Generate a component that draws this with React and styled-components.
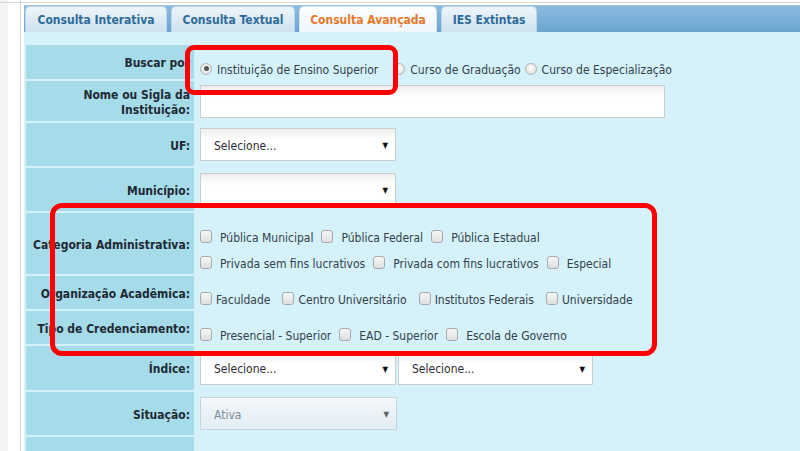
import React from "react";
import styled, { createGlobalStyle } from "styled-components";

const Global = createGlobalStyle`
  html, body { margin: 0; padding: 0; background: #fff; }
  body { font-family: "DejaVu Sans Condensed", "DejaVu Sans", sans-serif; font-stretch: condensed; }
  * { box-sizing: border-box; }
`;

const Page = styled.div`
  position: relative;
  width: 800px;
  height: 451px;
  overflow: hidden;
  padding: 5px 0 0 24px;
  background:
    linear-gradient(to bottom, transparent 2px, #d6d6d6 2px, #d6d6d6 3px, transparent 3px) 0 0 / 100% 5px no-repeat,
    linear-gradient(to right, #f3f3f3 0, #f3f3f3 8px, #fff 8px, #fff 20px, #d2d2d2 20px, #d2d2d2 21px, #fff 21px);
`;

const Panel = styled.div`
  height: 100%;
  background: #d5f1f9;
  display: flex;
  flex-direction: column;
`;

const TabBar = styled.div`
  height: 28px;
  display: flex;
  align-items: flex-end;
  gap: 4px;
  padding-left: 1px;
  background: linear-gradient(to bottom, #8dbadd 0%, #78aed6 60%, #6aa3cf 100%);
  border-top: 1px solid #9cc3e0;
`;

const Tab = styled.div`
  height: 26px;
  width: ${(p) => p.$w}px;
  border-radius: 5px 5px 0 0;
  border: 1px solid ${(p) => (p.$active ? "#cfe6f1" : "#bcd7ea")};
  border-bottom: none;
  background: ${(p) =>
    p.$active
      ? "linear-gradient(to bottom, #fbfdfe 0%, #eef7fb 100%)"
      : "linear-gradient(to bottom, #eef5fa 0%, #d9e9f3 60%, #cde3ef 100%)"};
  color: ${(p) => (p.$active ? "#e8782a" : "#2f6a99")};
  font-weight: bold;
  font-size: 12px;
  display: flex;
  align-items: center;
  justify-content: center;
  padding-top: 1px;
`;

const Form = styled.div`
  padding: 13px 0 0 2px;
  display: grid;
  grid-template-columns: 168px 1fr;
  grid-auto-rows: auto;
  row-gap: 2px;
  column-gap: 2px;
`;

const Label = styled.div`
  background: #a6dbea;
  height: ${(p) => p.$h}px;
  display: flex;
  align-items: center;
  justify-content: flex-end;
  text-align: right;
  padding: 3px 4px 0 0;
  font-weight: bold;
  font-size: 12px;
  line-height: 15px;
  color: #1e2a33;
`;

const Cell = styled.div`
  height: ${(p) => p.$h}px;
  display: flex;
  align-items: center;
  padding-left: 4px;
  padding-top: ${(p) => p.$pt || 0}px;
  font-size: 12px;
  color: #33414a;
`;

const Stack = styled.div`
  display: flex;
  flex-direction: column;
  gap: 8px;
`;

const Line = styled.div`
  display: flex;
  align-items: center;
  height: 18px;
`;

const Opt = styled.label`
  display: flex;
  align-items: center;
  gap: ${(p) => (p.$tight ? 4 : 8)}px;
  margin-right: ${(p) => (p.$tight ? 12 : 8)}px;
  white-space: nowrap;
  &:last-child { margin-right: 0; }
`;

const RadioOpt = styled.label`
  display: flex;
  align-items: center;
  gap: 5px;
  margin-right: ${(p) => p.$mr || 4}px;
  white-space: nowrap;
`;

const Radio = styled.span`
  width: 12px;
  height: 12px;
  border-radius: 50%;
  border: 1px solid #b4b4b4;
  background: radial-gradient(circle at 50% 40%, #ffffff 0%, #e4e4e4 70%, #d0d0d0 100%);
  display: flex;
  align-items: center;
  justify-content: center;
  margin-top: -2px;
  &::after {
    content: "";
    width: 5px;
    height: 5px;
    border-radius: 50%;
    background: ${(p) => (p.$checked ? "#555" : "transparent")};
  }
`;

const Box = styled.span`
  width: 12px;
  height: 13px;
  border-radius: 3px;
  border: 1px solid #a9a9a9;
  background: linear-gradient(to bottom, #f6f6f6 0%, #e0e0e0 100%);
  margin-top: -3px;
`;

const Select = styled.div`
  width: ${(p) => p.$w || 196}px;
  height: 33px;
  border: 1px solid ${(p) => (p.$disabled ? "#c4d3dd" : "#cccccc")};
  background: ${(p) =>
    p.$disabled
      ? "linear-gradient(to bottom, #f3f8fb 0%, #e2edf4 100%)"
      : "linear-gradient(to bottom, #eeeeee 0%, #ffffff 35%, #ffffff 100%)"};
  display: flex;
  align-items: center;
  justify-content: space-between;
  padding: 2px 7px 0 13px;
  font-size: 12px;
  color: ${(p) => (p.$disabled ? "#7c8b96" : "#2d2d35")};
`;

const Arrow = styled.span`
  font-size: 8px;
  color: ${(p) => (p.$disabled ? "#5d6770" : "#111")};
`;

const Input = styled.div`
  width: 465px;
  height: 33px;
  border: 1px solid #cccccc;
  background: linear-gradient(to bottom, #eeeeee 0%, #ffffff 35%, #ffffff 100%);
`;

const Pair = styled.div`
  display: flex;
  gap: 2px;
`;

const Mark = styled.div`
  position: absolute;
  left: ${(p) => p.$x}px;
  top: ${(p) => p.$y}px;
  width: ${(p) => p.$w}px;
  height: ${(p) => p.$h}px;
  border: 5px solid #ff0000;
  border-radius: ${(p) => p.$r}px;
  pointer-events: none;
`;

const Check = ({ children, tight }) => (
  <Opt $tight={tight}>
    <Box />
    <span>{children}</span>
  </Opt>
);

export default function App() {
  return (
    <>
      <Global />
      <Page>
        <Panel>
          <TabBar>
            <Tab $w={142}>Consulta Interativa</Tab>
            <Tab $w={124}>Consulta Textual</Tab>
            <Tab $w={138} $active>Consulta Avançada</Tab>
            <Tab $w={96}>IES Extintas</Tab>
          </TabBar>
          <Form>
            <Label $h={34}>Buscar por</Label>
            <Cell $h={34} $pt={15}>
              <RadioOpt $mr={15}><Radio $checked /> Instituição de Ensino Superior</RadioOpt>
              <RadioOpt><Radio /> Curso de Graduação</RadioOpt>
              <RadioOpt><Radio /> Curso de Especialização</RadioOpt>
            </Cell>

            <Label $h={40}>Nome ou Sigla da<br />Instituição:</Label>
            <Cell $h={40}><Input /></Cell>

            <Label $h={43}>UF:</Label>
            <Cell $h={43}><Select>Selecione...<Arrow>▼</Arrow></Select></Cell>

            <Label $h={43}>Município:</Label>
            <Cell $h={43}><Select><span /><Arrow>▼</Arrow></Select></Cell>

            <Label $h={61}>Categoria Administrativa:</Label>
            <Cell $h={61} $pt={14}>
              <Stack>
                <Line>
                  <Check>Pública Municipal</Check>
                  <Check>Pública Federal</Check>
                  <Check>Pública Estadual</Check>
                </Line>
                <Line>
                  <Check>Privada sem fins lucrativos</Check>
                  <Check>Privada com fins lucrativos</Check>
                  <Check>Especial</Check>
                </Line>
              </Stack>
            </Cell>

            <Label $h={33}>Organização Acadêmica:</Label>
            <Cell $h={33} $pt={14}>
              <Line>
                <Check tight>Faculdade</Check>
                <Check tight>Centro Universitário</Check>
                <Check tight>Institutos Federais</Check>
                <Check tight>Universidade</Check>
              </Line>
            </Cell>

            <Label $h={33}>Tipo de Credenciamento:</Label>
            <Cell $h={33} $pt={17}>
              <Line>
                <Check>Presencial - Superior</Check>
                <Check>EAD - Superior</Check>
                <Check>Escola de Governo</Check>
              </Line>
            </Cell>

            <Label $h={44}>Índice:</Label>
            <Cell $h={44}>
              <Pair>
                <Select>Selecione...<Arrow>▼</Arrow></Select>
                <Select $w={195}>Selecione...<Arrow>▼</Arrow></Select>
              </Pair>
            </Cell>

            <Label $h={43}>Situação:</Label>
            <Cell $h={43}>
              <Select $w={197} $disabled>Ativa<Arrow $disabled>▼</Arrow></Select>
            </Cell>

            <Label $h={40} />
            <Cell $h={40} />
          </Form>
        </Panel>
        <Mark $x={185} $y={45} $w={213} $h={50} $r={9} />
        <Mark $x={50} $y={203} $w={607} $h={153} $r={12} />
      </Page>
    </>
  );
}
